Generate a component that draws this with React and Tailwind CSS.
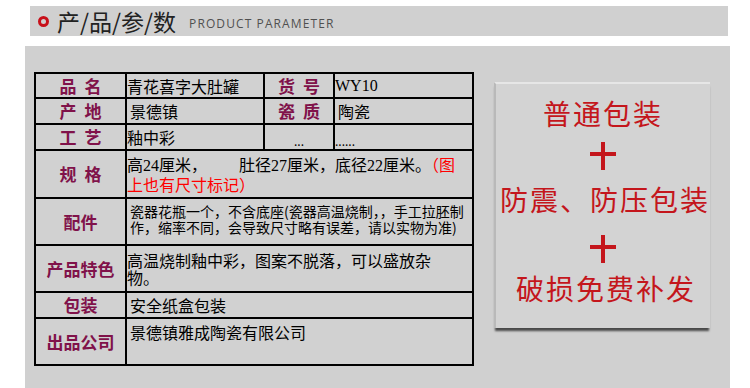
import React from 'react';

const cjk = { fontFamily: '"Noto Sans CJK SC", "Noto Sans", sans-serif' };
const serif = { fontFamily: '"Liberation Serif", "Noto Sans CJK SC", serif' };

// label cell text, optional gap between the characters
const Label = ({ text, spaced }) => (
  <div
    className={`flex items-center justify-center bg-[#d1d1d1] text-[17px] font-bold text-[#80124a] ${spaced ? 'gap-[8px]' : ''}`}
    style={cjk}
  >
    {text.split('').map((c, i) => (
      <span key={i}>{c}</span>
    ))}
  </div>
);

const Cell = ({ children, className = '' }) => (
  <div className={`flex bg-[#d1d1d1] text-black ${className}`} style={cjk}>
    {children}
  </div>
);

const Num = ({ children }) => <span style={serif}>{children}</span>;

const Plus = () => (
  <svg width="26" height="28" viewBox="0 0 26 28">
    <rect x="11" y="0" width="4" height="28" fill="#c4161c" />
    <rect x="0" y="10" width="26" height="4" fill="#c4161c" />
  </svg>
);

export default function App() {
  return (
    <div className="w-[750px] h-[388px] overflow-hidden bg-white">
      {/* title bar */}
      <div className="ml-[30px] mt-[6px] w-[698px] h-[30px] bg-[#d0d0d0] flex items-center">
        <div className="ml-[8px] w-[11px] h-[11px] rounded-full border-[3px] border-[#c8101a]" />
        <div className="ml-[8px] text-[23px] leading-none text-[#222]" style={cjk}>
          产/品/参/数
        </div>
        <div
          className="ml-[13px] mt-[5px] text-[12px] tracking-[1.1px] text-[#505050]"
          style={{ fontFamily: '"Open Sans", "Noto Sans", sans-serif' }}
        >
          PRODUCT PARAMETER
        </div>
      </div>

      {/* body panel */}
      <div className="ml-[25px] mt-[10px] w-[705px] h-[342px] bg-[#d0d0d0] flex items-start">
        <div className="ml-[9px] mt-[26px] w-[440px] grid grid-cols-[89px_136px_68px_137px] grid-rows-[23px_24px_24px_46px_45px_45px_24px_45px] gap-[2px] p-[2px] bg-black">
          <Label text="品名" spaced />
          <Cell className="items-center text-[16px]">青花喜字大肚罐</Cell>
          <Label text="货号" spaced />
          <Cell className="items-center text-[16px]">
            <span style={serif}>WY10</span>
          </Cell>

          <Label text="产地" spaced />
          <Cell className="items-center pl-[3px] text-[16px]">景德镇</Cell>
          <Label text="瓷质" spaced />
          <Cell className="items-center pl-[3px] text-[16px]">陶瓷</Cell>

          <Label text="工艺" spaced />
          <Cell className="items-center text-[16px]">釉中彩</Cell>
          <Cell className="items-end justify-center text-[12px] leading-[16px]">...</Cell>
          <Cell className="items-end text-[12px] leading-[16px]">......</Cell>

          <Label text="规格" spaced />
          <Cell className="col-span-3 flex-col justify-center text-[16px]">
            <div className="leading-[18px] whitespace-nowrap">
              高<Num>24</Num>厘米，<span className="inline-block w-[32px]" />肚径<Num>27</Num>厘米，底径<Num>22</Num>厘米。<span className="text-[#ff0000]">（图</span>
            </div>
            <div className="leading-[18px] whitespace-nowrap text-[#ff0000]">上也有尺寸标记）</div>
          </Cell>

          <Label text="配件" />
          <Cell className="col-span-3 flex-col justify-center pl-[3px] pb-[6px] text-[14px]">
            <div className="leading-[16px] whitespace-nowrap">瓷器花瓶一个，不含底座(瓷器高温烧制，，手工拉胚制</div>
            <div className="leading-[16px] whitespace-nowrap">作，缩率不同，会导致尺寸略有误差，请以实物为准)</div>
          </Cell>

          <Label text="产品特色" />
          <Cell className="col-span-3 flex-col justify-center text-[16px]">
            <div className="leading-[17px] whitespace-nowrap">高温烧制釉中彩，图案不脱落，可以盛放杂</div>
            <div className="leading-[17px] whitespace-nowrap">物。</div>
          </Cell>

          <Label text="包装" />
          <Cell className="col-span-3 items-center pl-[3px] text-[16px]">安全纸盒包装</Cell>

          <Label text="出品公司" />
          <Cell className="col-span-3 items-start pl-[3px] pt-[4px] leading-[18px] text-[16px]">景德镇雅成陶瓷有限公司</Cell>
        </div>

        {/* packaging note image */}
        <div
          className="ml-[20px] mt-[36px] w-[216px] h-[246px] bg-[#d3d3d3] border-t-2 border-t-[#e6e6e6] border-l-2 border-l-[#b9b9b9] shadow-[0_4px_2px_-1px_rgba(0,0,0,0.65)] flex flex-col items-center text-[28px] tracking-[2px] text-[#c4161c]"
          style={cjk}
        >
          <div className="mt-[9px] h-[40px] leading-[40px]">普通包装</div>
          <div className="h-[45px] flex items-center">
            <Plus />
          </div>
          <div className="h-[42px] leading-[42px] pl-[4px]">防震、防压包装</div>
          <div className="h-[57px] flex items-center">
            <Plus />
          </div>
          <div className="h-[22px] leading-[22px] pl-[6px]">破损免费补发</div>
        </div>
      </div>
    </div>
  );
}
